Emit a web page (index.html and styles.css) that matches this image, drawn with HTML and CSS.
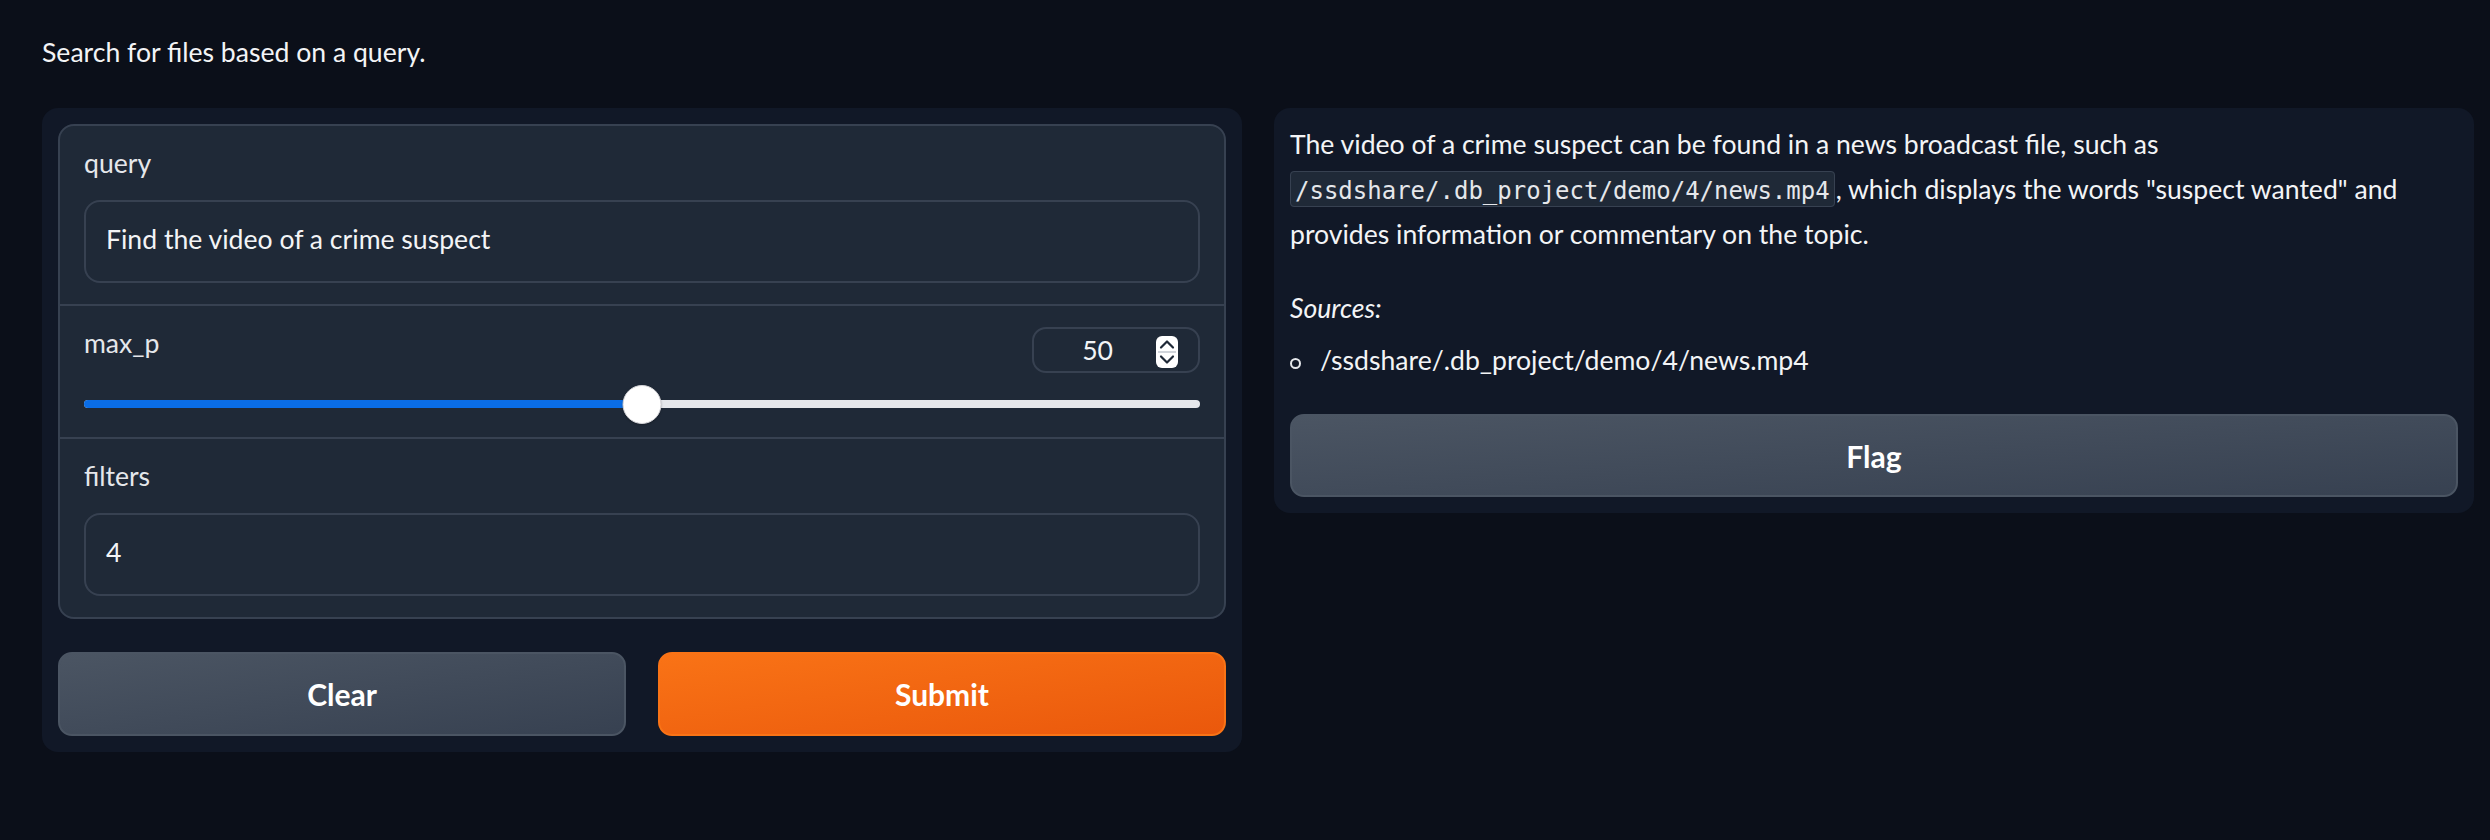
FILE: index.html
```html
<!DOCTYPE html>
<html lang="en">
<head>
<meta charset="utf-8">
<title>Search for files</title>
<link rel="stylesheet" href="styles.css">
</head>
<body>
<div class="page">
  <div class="desc">Search for files based on a query.</div>
  <div class="cols">
    <div class="panel panel-left">
      <div class="form">
        <div class="block">
          <div class="label">query</div>
          <div class="input">Find the video of a crime suspect</div>
        </div>
        <div class="block slider-block">
          <div class="row">
            <div class="label">max_p</div>
            <div class="numbox">
              <span class="num">50</span>
              <svg class="spin" width="22" height="32" viewBox="0 0 22 32">
                <rect width="22" height="32" rx="6" fill="#ffffff"/>
                <line x1="2" y1="16" x2="20" y2="16" stroke="#d1d5db" stroke-width="2"/>
                <path d="M5 11.5 L11 5.5 L17 11.5" fill="none" stroke="#1f2937" stroke-width="2.2" stroke-linecap="round" stroke-linejoin="round"/>
                <path d="M5 20.5 L11 26.5 L17 20.5" fill="none" stroke="#1f2937" stroke-width="2.2" stroke-linecap="round" stroke-linejoin="round"/>
              </svg>
            </div>
          </div>
          <div class="slider">
            <div class="track"><div class="fill" style="width:50%"></div></div>
            <div class="thumb" style="left:50%"></div>
          </div>
        </div>
        <div class="block">
          <div class="label">filters</div>
          <div class="input">4</div>
        </div>
      </div>
      <div class="buttons">
        <button class="btn btn-secondary">Clear</button>
        <button class="btn btn-primary">Submit</button>
      </div>
    </div>
    <div class="panel panel-right">
      <div class="md">
        <p>The video of a crime suspect can be found in a news broadcast file, such as <code>/ssdshare/.db_project/demo/4/news.mp4</code>, which displays the words "suspect wanted" and provides information or commentary on the topic.</p>
        <p><em>Sources:</em></p>
        <ul>
          <li>/ssdshare/.db_project/demo/4/news.mp4</li>
        </ul>
      </div>
      <button class="btn btn-secondary btn-flag">Flag</button>
    </div>
  </div>
</div>
</body>
</html>
```

FILE: styles.css
```css
html, body {
  margin: 0;
  padding: 0;
  background: #0b0f19;
}

body {
  font-family: "Lato", "Noto Sans", sans-serif;
  color: #f3f4f6;
}

.page {
  padding: 30px 16px 0 42px;
}

.desc {
  font-size: 26.6px;
  line-height: 45px;
  color: #f3f4f6;
}

.cols {
  display: flex;
  align-items: flex-start;
  gap: 32px;
  margin-top: 33px;
}

.panel {
  width: 1200px;
  box-sizing: border-box;
  background: #111827;
  border-radius: 16px;
}

.panel-left {
  padding: 16px;
}

.panel-right {
  padding: 14px 16px 16px;
}

.form {
  border: 2px solid #374151;
  border-radius: 16px;
  background: #1f2937;
  overflow: hidden;
}

.block {
  padding: 20px 24px 21px;
}

.block + .block {
  border-top: 2px solid #374151;
}

.label {
  font-size: 26.6px;
  line-height: 34px;
  margin-bottom: 20px;
  color: #e5e7eb;
}

.input {
  height: 83px;
  box-sizing: border-box;
  border: 2px solid #374151;
  border-radius: 16px;
  background: #1f2937;
  padding: 0 20px 4px;
  font-size: 26.6px;
  line-height: 75px;
  color: #f3f4f6;
}

.slider-block {
  padding: 20px 24px 13px;
}

.row {
  display: flex;
  justify-content: space-between;
  align-items: flex-end;
  height: 47px;
}

.row .label {
  margin: 0;
  align-self: flex-start;
}

.numbox {
  width: 168px;
  height: 46px;
  box-sizing: border-box;
  border: 2px solid #374151;
  border-radius: 14px;
  display: flex;
  align-items: center;
  justify-content: flex-end;
  padding-right: 20px;
}

.num {
  font-size: 26.6px;
  margin-right: 43px;
  color: #f3f4f6;
}

.spin {
  display: block;
  margin-top: 4px;
}

.slider {
  position: relative;
  height: 40px;
  margin-top: 11px;
}

.track {
  position: relative;
  top: 16px;
  height: 8px;
  border-radius: 4px;
  background: #e5e7eb;
  overflow: hidden;
}

.fill {
  height: 100%;
  background: #0a6de6;
}

.thumb {
  position: absolute;
  top: 0.5px;
  width: 39px;
  height: 39px;
  box-sizing: border-box;
  transform: translateX(-50%);
  border-radius: 50%;
  background: #ffffff;
  border: 1px solid #d4d4d8;
  box-shadow: 0 1px 2px rgba(0, 0, 0, 0.25);
}

.buttons {
  display: flex;
  gap: 32px;
  margin-top: 33px;
}

.btn {
  flex: 1;
  height: 84px;
  box-sizing: border-box;
  border-radius: 14px;
  border: 2px solid;
  font-family: "Lato", "Noto Sans", sans-serif;
  font-weight: 700;
  font-size: 30px;
  color: #ffffff;
  cursor: pointer;
  padding: 0;
}

.btn-secondary {
  background: linear-gradient(to bottom right, #4b5563, #374151);
  border-color: #4b5563;
}

.btn-primary {
  background: linear-gradient(to bottom right, #f97316, #ea580c);
  border-color: #f97316;
}

.btn-flag {
  display: block;
  width: 100%;
  height: 83px;
  margin-top: 31px;
}

.md {
  font-size: 26.6px;
  line-height: 45px;
  color: #f3f4f6;
}

.md p {
  margin: 0 0 29px;
}

.md p:last-of-type {
  margin-bottom: 0;
}

.md code {
  font-family: "DejaVu Sans Mono", "Liberation Mono", monospace;
  font-size: 24px;
  line-height: 1;
  padding: 5px 4px 1px;
  margin-right: 1px;
  border: 1px solid #374151;
  border-radius: 4px;
  background: #1f2937;
  color: #e5e7eb;
}

.md ul {
  margin: 7px 0 0;
  padding: 0;
  list-style: none;
}

.md li {
  position: relative;
  padding-left: 30px;
}

.md li::before {
  content: "";
  position: absolute;
  left: 0;
  top: 20px;
  width: 11px;
  height: 11px;
  box-sizing: border-box;
  border: 2px solid #e5e7eb;
  border-radius: 50%;
}
```
